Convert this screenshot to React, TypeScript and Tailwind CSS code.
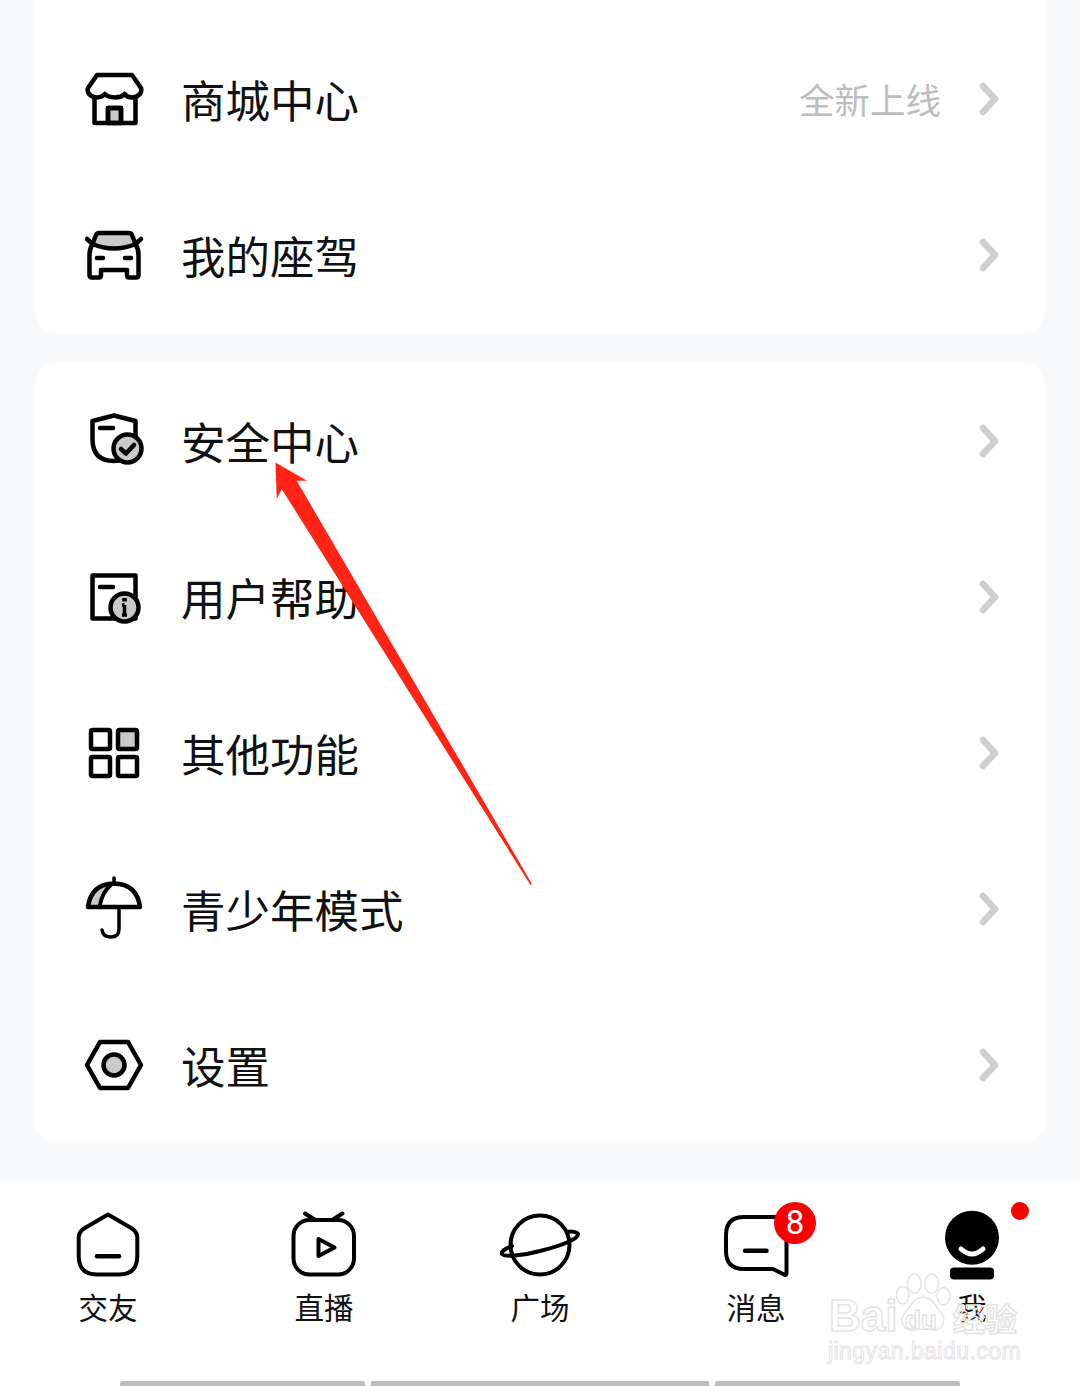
const GRAY = "#c9c9c9";

function IconBox({ children }: { children: React.ReactNode }) {
  return (
    <svg viewBox="0 0 64 64" className="w-[64px] h-[64px] shrink-0 overflow-visible" fill="none" stroke="#000" strokeWidth="4.500" strokeLinecap="round" strokeLinejoin="round">
      {children}
    </svg>
  );
}

function StoreIcon() {
  return (
    <IconBox>
      <rect x="26" y="41" width="13" height="15" fill={GRAY} />
      <path d="M12.500 31V56H53.500V31" />
      <path d="M15 8H50L59 21Q60 24 58 27C54 31.500 46 31.500 42.500 27C39 31.500 27 31.500 23 27C19 31.500 11 31.500 7 27Q5 24 6 21Z" fill="#fff" />
      <path d="M26 56V41H39V56" />
    </IconBox>
  );
}

function CarIcon() {
  return (
    <IconBox>
      <path d="M17 10H47Q49 10 50 12L53.500 21Q32 30 10.500 21L14 12Q15 10 17 10Z" fill={GRAY} />
      <path d="M5 16L10.500 21M59 16L53.500 21" />
      <path d="M10.500 21Q7.500 26 7.500 32V52Q7.500 54.500 10 54.500H17Q19 54.500 19 52V47H45V52Q45 54.500 47 54.500H54Q56.500 54.500 56.500 52V32Q56.500 26 53.500 21" />
      <path d="M15 35H21M43 35H49" />
    </IconBox>
  );
}

function ShieldIcon() {
  return (
    <IconBox>
      <path d="M10.500 12L32 6.500L53.500 12V30Q53.500 52 32 52Q10.500 52 10.500 30Z" fill="#fff" />
      <path d="M18 19H31" />
      <circle cx="45.500" cy="39.500" r="14" fill={GRAY} />
      <path d="M39 40L44 44.500L52 36" />
    </IconBox>
  );
}

function HelpIcon() {
  return (
    <IconBox>
      <rect x="10.500" y="10.500" width="43" height="43" fill="#fff" />
      <path d="M18 22H31" />
      <circle cx="42.500" cy="42.500" r="14" fill={GRAY} />
      <path d="M42.500 40V50M40 40H42.500M40 50H45" strokeWidth="3.500" strokeLinecap="butt" />
      <path d="M42.500 33V36.500" strokeWidth="4.500" strokeLinecap="butt" />
    </IconBox>
  );
}

function GridIcon() {
  return (
    <IconBox>
      <rect x="9" y="9" width="19" height="19" rx="1.500" />
      <rect x="36" y="9" width="19" height="19" rx="1.500" fill={GRAY} />
      <rect x="9" y="36" width="19" height="19" rx="1.500" />
      <rect x="36" y="36" width="19" height="19" rx="1.500" />
    </IconBox>
  );
}

function UmbrellaIcon() {
  return (
    <IconBox>
      <path d="M7 30Q9 14 22 9Q27 7 30 7Q20 15 18 30Z" fill={GRAY} stroke="none" />
      <path d="M6 30Q9 7 32 6.500Q55 7 58 30Z" />
      <path d="M29 8Q20 15 17.500 30" strokeWidth="4" />
      <path d="M32 1V6" strokeWidth="3.500" />
      <path d="M37 31V52Q37 60 29 60Q21 60 20 53" strokeWidth="3.500" />
    </IconBox>
  );
}

function HexIcon() {
  return (
    <IconBox>
      <path d="M18 9H46L59 32L46 55H18L5 32Z" />
      <circle cx="32" cy="32" r="10.500" fill={GRAY} />
    </IconBox>
  );
}

function Chevron() {
  return (
    <svg viewBox="0 0 18 32" className="w-[18px] h-[32px] shrink-0 overflow-visible" fill="none" stroke="#cfcfcf" strokeWidth="6.500" strokeLinecap="round" strokeLinejoin="round">
      <path d="M3 3L15 16L3 29" />
    </svg>
  );
}

function Row({ icon, label, extra }: { icon: React.ReactNode; label: string; extra?: string }) {
  return (
    <div className="h-[156px] flex items-center pl-[46px] pr-[46px]">
      {icon}
      <span className="ml-[35px] mb-[1px] text-[44.500px] leading-[60px] text-[#111]">{label}</span>
      {extra && <span className="ml-auto text-[35.500px] text-[#bdbdbd] leading-[50px]">{extra}</span>}
      <div className={extra ? "ml-[39px]" : "ml-auto"}>
        <Chevron />
      </div>
    </div>
  );
}

function NavIcon({ children }: { children: React.ReactNode }) {
  return (
    <svg viewBox="0 0 72 72" className="w-[72px] h-[72px] overflow-visible" fill="none" stroke="#000" strokeWidth="4" strokeLinecap="round" strokeLinejoin="round">
      {children}
    </svg>
  );
}

function Tab({ icon, label, children }: { icon: React.ReactNode; label: string; children?: React.ReactNode }) {
  return (
    <div className="relative w-[216px] flex flex-col items-center">
      {icon}
      <span className="mt-[4px] text-[29.500px] leading-[40px] text-[#111]">{label}</span>
      {children}
    </div>
  );
}

function Watermark() {
  const outline = "absolute font-['Liberation_Sans',sans-serif] font-bold text-transparent [-webkit-text-stroke:1.500px_#e4e4e4]";
  return (
    <div className="absolute left-[826px] top-[1268px] w-[200px] h-[100px]">
      <span className={`${outline} left-[3px] top-[23px] text-[44px] leading-[50px]`}>Bai</span>
      <svg viewBox="0 0 60 66" className="absolute left-[67px] top-[3px] w-[60px] h-[64px]" fill="#fff" stroke="#e4e4e4" strokeWidth="1.500">
        <ellipse cx="21" cy="13" rx="7" ry="10" />
        <ellipse cx="39" cy="13" rx="7" ry="10" />
        <ellipse cx="9" cy="25" rx="6.500" ry="9" />
        <ellipse cx="51" cy="26" rx="6.500" ry="9" />
        <path d="M30 27C40 27 42 36 48 42C55 50 50 62 40 61Q30 59 20 61C9 62 5 50 12 42C18 36 20 27 30 27Z" />
      </svg>
      <span className={`${outline} left-[79px] top-[37px] text-[26px] leading-[30px]`}>du</span>
      <span className={`${outline} left-[127px] top-[26px] text-[32px] leading-[46px] font-['Noto_Sans_CJK_SC',sans-serif]`}>经验</span>
      <span className={`${outline} font-normal left-[2px] top-[68px] text-[23px] leading-[30px] tracking-[0.450px] whitespace-nowrap [-webkit-text-stroke:1px_#e4e4e4]`}>jingyan.baidu.com</span>
    </div>
  );
}

export default function App() {
  return (
    <div className="relative w-[1080px] h-[1386px] overflow-hidden bg-[#f9fafc] flex flex-col font-['Noto_Sans_CJK_SC','Noto_Sans',sans-serif]">
      {/* Card 1 */}
      <div className="mx-[36px] pt-[21px] bg-white rounded-b-[20px]">
        <Row icon={<StoreIcon />} label="商城中心" extra="全新上线" />
        <Row icon={<CarIcon />} label="我的座驾" />
      </div>

      {/* Card 2 */}
      <div className="mx-[36px] mt-[30px] bg-white rounded-[20px]">
        <Row icon={<ShieldIcon />} label="安全中心" />
        <Row icon={<HelpIcon />} label="用户帮助" />
        <Row icon={<GridIcon />} label="其他功能" />
        <Row icon={<UmbrellaIcon />} label="青少年模式" />
        <Row icon={<HexIcon />} label="设置" />
      </div>

      {/* Bottom nav */}
      <div className="mt-[38px] flex-1 bg-white flex flex-col">
        <div className="flex pt-[29px]">
          <Tab
            label="交友"
            icon={
              <NavIcon>
                <path d="M36 4.500L60 18.500Q65.300 22 65.300 28V46Q65.300 64.500 47 64.500H25Q6.700 64.500 6.700 46V28Q6.700 22 12 18.500Z" />
                <path d="M25 46.300H47" strokeWidth="4.500" />
              </NavIcon>
            }
          />
          <Tab
            label="直播"
            icon={
              <NavIcon>
                <rect x="5.500" y="10" width="60.500" height="54.500" rx="16" />
                <path d="M17 3.500L26.500 9.500M54.500 3.500L45 9.500" />
                <path d="M30.500 29L46.500 37.500L30.500 46Z" />
              </NavIcon>
            }
          />
          <Tab
            label="广场"
            icon={
              <NavIcon>
                <circle cx="36" cy="35" r="29.500" />
                <path d="M8 36C0 39 -3 42 -2 44C0 47 18 46 36 41C56 36 75 29 74 24C73 22 68 21 63 22" />
              </NavIcon>
            }
          />
          <Tab
            label="消息"
            icon={
              <NavIcon>
                <path d="M55 7H24Q6 7 6 25V41Q6 59 24 59H53L65 65Q66.500 65 66.500 63V26" />
                <path d="M25 40.700H46.500" strokeWidth="4.500" />
              </NavIcon>
            }
          >
            <span className="absolute left-[126px] top-[-8px] w-[42px] h-[42px] rounded-full bg-[#f60202] text-white text-[33px] leading-[42px] text-center font-['Roboto',sans-serif]">8</span>
          </Tab>
          <Tab
            label="我"
            icon={
              <NavIcon>
                <circle cx="36" cy="27.700" r="27" fill="#000" stroke="none" />
                <path d="M25 39Q36 49 47 39" stroke="#fff" strokeWidth="5" />
                <rect x="14" y="57.500" width="44" height="12" rx="4" fill="#000" stroke="none" />
              </NavIcon>
            }
          >
            <span className="absolute left-[147px] top-[-8px] w-[18px] h-[18px] rounded-full bg-[#f60202]" />
          </Tab>
        </div>
        <div className="mt-auto ml-[120px] flex gap-[6px]">
          <div className="w-[245px] h-[5px] rounded-t-[3px] bg-[#bdbdbd]" />
          <div className="w-[338px] h-[5px] bg-[#bdbdbd]" />
          <div className="w-[245px] h-[5px] rounded-t-[3px] bg-[#bdbdbd]" />
        </div>
      </div>

      {/* Arrow annotation */}
      <svg viewBox="0 0 1080 1386" className="absolute inset-0 w-[1080px] h-[1386px] pointer-events-none">
        <path d="M275.500 462.500L307 480.700L296.700 480.700L532 884L530.500 885L281.700 489L276.700 499Z" fill="#ff2416" />
      </svg>

      <Watermark />
    </div>
  );
}
